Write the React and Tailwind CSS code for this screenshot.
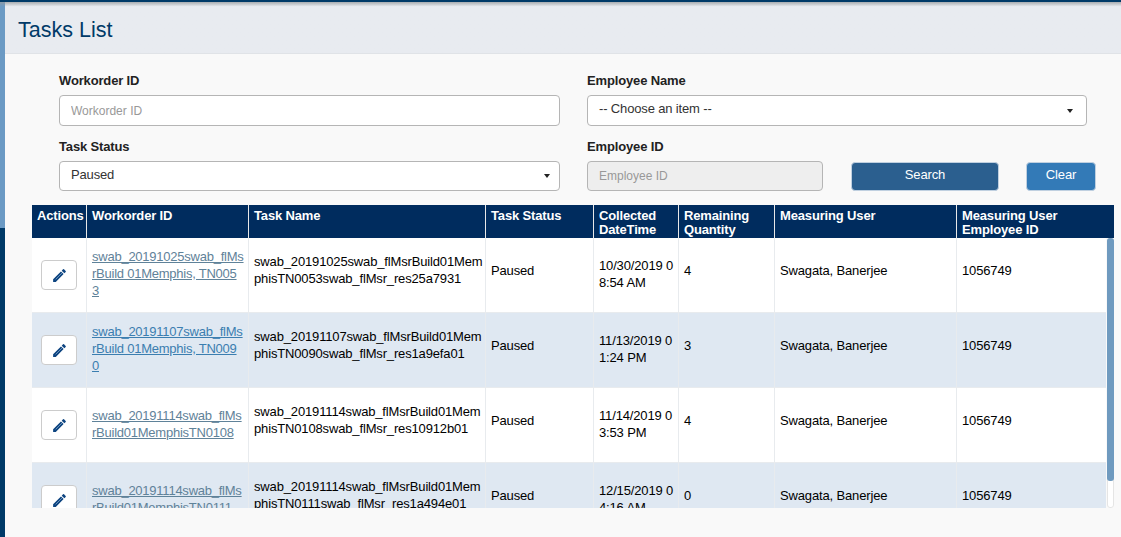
import React from 'react';

const rows = [
  {
    link: 'swab_20191025swab_flMs\nrBuild 01Memphis, TN005\n3',
    name: 'swab_20191025swab_flMsrBuild01MemphisTN0053swab_flMsr_res25a7931',
    date: '10/30/2019 08:54 AM',
    qty: 4,
  },
  {
    link: 'swab_20191107swab_flMs\nrBuild 01Memphis, TN009\n0',
    name: 'swab_20191107swab_flMsrBuild01MemphisTN0090swab_flMsr_res1a9efa01',
    date: '11/13/2019 01:24 PM',
    qty: 3,
  },
  {
    link: 'swab_20191114swab_flMs\nrBuild01MemphisTN0108',
    name: 'swab_20191114swab_flMsrBuild01MemphisTN0108swab_flMsr_res10912b01',
    date: '11/14/2019 03:53 PM',
    qty: 4,
  },
  {
    link: 'swab_20191114swab_flMs\nrBuild01MemphisTN0111',
    name: 'swab_20191114swab_flMsrBuild01MemphisTN0111swab_flMsr_res1a494e01',
    date: '12/15/2019 04:16 AM',
    qty: 0,
  },
];

const gridCols = 'grid grid-cols-[54px_162px_237px_108px_85px_96px_182px_158px]';

const Pencil = () => (
  <svg className="w-[17px] h-[17px] text-[#0d4480]" viewBox="0 0 24 24" fill="currentColor">
    <path d="M3 17.25V21h3.75L17.81 9.94l-3.75-3.75L3 17.25zM20.71 7.04a1 1 0 0 0 0-1.41l-2.34-2.34a1 1 0 0 0-1.41 0l-1.83 1.83 3.75 3.75 1.83-1.83z" />
    <path d="M6.5 17.5L15.5 8.5" stroke="#8fb0d0" strokeWidth="1" />
  </svg>
);

const Caret = () => (
  <span className="w-0 h-0 border-x-[3px] border-x-transparent border-t-[4px] border-t-[#222]" />
);

const App = () => {
  return (
    <div className="w-[1121px] h-[537px] overflow-hidden flex flex-col bg-[#f9f9f9] font-['Liberation_Sans',Arial,sans-serif] text-[13px] tracking-[-0.15px]">
      <div className="h-[2px] bg-[#003a68]" />
      <div className="flex-1 min-h-0 flex">
        <div className="w-[5px] flex flex-col">
          <div className="h-[226px] bg-gradient-to-b from-[#8a9aa8] from-0% via-[#6b9ac4] via-[2%] to-[#6b9ac4]" />
          <div className="flex-1 bg-[#003a68]" />
        </div>
        <div className="flex-1 min-w-0 flex flex-col">
          <div className="h-[52px] border-b border-[#e0e3e7] pl-[13px] pt-[12px] text-[21.5px] tracking-normal leading-[32px] text-[#003a68] bg-gradient-to-b from-[#a9adb1] from-0% via-[#e8ebf0] via-[9%] to-[#e8ebf0]">
            Tasks List
          </div>
          <div className="pl-[54px] pt-[18px] w-[1060px] grid grid-cols-[501px_500px] gap-x-[27px]">
            <div>
              <div className="font-bold text-[#222] leading-[18px] h-[23px]">Workorder ID</div>
              <input
                placeholder="Workorder ID"
                className="w-full h-[31px] bg-white border border-[#b5b5b5] rounded-[4px] px-[11px] text-[12px] tracking-normal placeholder:text-[#999]"
              />
            </div>
            <div>
              <div className="font-bold text-[#222] leading-[18px] h-[23px]">Employee Name</div>
              <div className="h-[31px] bg-white border border-[#b5b5b5] rounded-[4px] pl-[11px] pr-[13px] flex items-center justify-between text-[#333]">
                <span className="-mt-[3px]">-- Choose an item --</span>
                <Caret />
              </div>
            </div>
            <div className="mt-[12px]">
              <div className="font-bold text-[#222] leading-[18px] h-[23px]">Task Status</div>
              <div className="h-[30px] bg-white border border-[#b5b5b5] rounded-[4px] pl-[11px] pr-[9px] flex items-center justify-between text-[#333]">
                <span className="-mt-[3px]">Paused</span>
                <Caret />
              </div>
            </div>
            <div className="mt-[12px]">
              <div className="font-bold text-[#222] leading-[18px] h-[23px]">Employee ID</div>
              <div className="flex items-center">
                <input
                  disabled
                  placeholder="Employee ID"
                  className="w-[236px] shrink-0 h-[30px] bg-[#eeeeee] border border-[#b5b5b5] rounded-[4px] px-[11px] text-[12px] tracking-normal placeholder:text-[#999]"
                />
                <button className="ml-[28px] w-[148px] shrink-0 h-[29px] pb-[3px] bg-[#2b5f8f] rounded-[4px] text-white border border-[#c0d0e0]">Search</button>
                <button className="ml-[27px] w-[70px] shrink-0 h-[29px] pb-[3px] bg-[#337ab7] rounded-[4px] text-white border border-[#c0d0e0]">Clear</button>
              </div>
            </div>
          </div>
          <div className="ml-[27px] mt-[14px] w-[1082px] h-[303px] overflow-hidden relative">
            <div className={`${gridCols} h-[33px] bg-[#002c5e] text-white font-bold leading-[14px]`}>
              {['Actions', 'Workorder ID', 'Task Name', 'Task Status', 'Collected DateTime', 'Remaining Quantity', 'Measuring User', 'Measuring User Employee ID'].map((h, i) => (
                <div key={h} className={`pt-[4px] ${i === 0 ? 'pl-[5px]' : 'pl-[5px] border-l border-[#e8e8e8]'}`}>
                  {h}
                </div>
              ))}
            </div>
            {rows.map((r, i) => (
              <div key={r.name} className={`${gridCols} h-[75px] border-b border-[#e8ebee] leading-[17px] text-black ${i % 2 ? 'bg-[#dfe8f2]' : 'bg-white'}`}>
                <div className="flex items-center justify-center">
                  <button className="w-[36px] h-[30px] bg-white border border-[#ccc] rounded-[4px] flex items-center justify-center">
                    <Pencil />
                  </button>
                </div>
                <div className="border-l border-[#e8ebee] pl-[5px] pb-[3px] flex items-center">
                  <a href="#" className={`underline whitespace-pre-line tracking-[-0.24px] ${i === 1 ? 'text-[#3b7eb0]' : 'text-[#5f8299]'}`}>{r.link}</a>
                </div>
                <div className="border-l border-[#e8ebee] pl-[5px] pr-[1px] pb-[10px] flex items-center break-all">{r.name}</div>
                <div className="border-l border-[#e8ebee] px-[5px] pb-[10px] flex items-center">Paused</div>
                <div className="border-l border-[#e8ebee] pl-[5px] pr-[2px] pb-[3px] flex items-center break-all">{r.date}</div>
                <div className="border-l border-[#e8ebee] px-[5px] pb-[10px] flex items-center">{r.qty}</div>
                <div className="border-l border-[#e8ebee] px-[5px] pb-[10px] flex items-center">Swagata, Banerjee</div>
                <div className="border-l border-[#e8ebee] px-[5px] pb-[10px] flex items-center">1056749</div>
              </div>
            ))}
            {/* scrollbar */}
            <div className="absolute right-0 top-[33px] bottom-0 w-[8px] pl-px bg-[#f9f9f9]">
              <div className="h-full bg-white border border-[#e5e5e5] rounded-[3px]">
                <div className="h-[243px] -mx-px -mt-px bg-[#6f9abf] rounded-[3px]" />
              </div>
            </div>
          </div>
        </div>
      </div>
    </div>
  );
};

export default App;
